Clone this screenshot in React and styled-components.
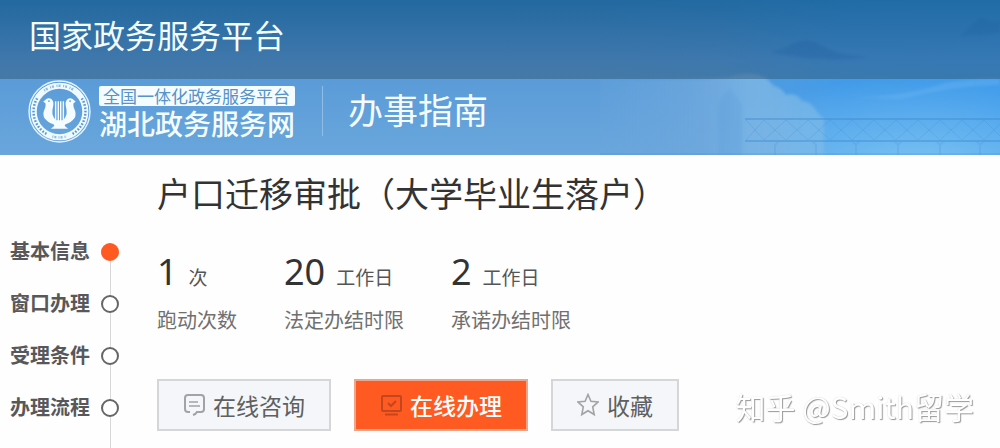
import React from "react";
import styled, { createGlobalStyle } from "styled-components";

const GlobalStyle = createGlobalStyle`
  * {
    box-sizing: border-box;
  }

  body {
    margin: 0;
    background: #fefefe;
    color: #333;
    font-family: "Noto Sans CJK SC", sans-serif;
  }

  h1,
  h2,
  p,
  ul,
  dl,
  dd {
    margin: 0;
    padding: 0;
  }
`;

const Page = styled.div`
  display: flex;
  flex-direction: column;
  min-height: 100vh;
`;

const StyledHeader = styled.header`
  position: relative;
  overflow: hidden;
  background: linear-gradient(#4592d4 0%, #5a9bd8 50%, #69a6dc 100%);
  color: #f4fcff;
`;

const Backdrop = styled.svg`
  position: absolute;
  top: 0;
  right: 0;
  width: 400px;
  height: 100%;
`;

const TopBar = styled.div`
  position: relative;
  padding: 10px 29px 21px;
  background: linear-gradient(
    rgba(20, 88, 138, 0.7),
    rgba(46, 92, 136, 0.55) 75%,
    rgba(50, 94, 126, 0.55)
  );
  font-size: 32px;
  line-height: 48px;
`;

const BrandBar = styled.div`
  position: relative;
  display: flex;
  align-items: center;
  height: 76px;
  padding: 0 28px 12px;
`;

const Brand = styled.a`
  display: flex;
  align-items: center;
  gap: 8px;
  color: inherit;
  text-decoration: none;
`;

const Emblem = styled.svg`
  width: 63px;
  height: 63px;
`;

const BrandText = styled.span`
  display: flex;
  flex-direction: column;
  padding-top: 4px;
`;

const BrandTag = styled.span`
  padding: 0 4px;
  border-radius: 2px;
  background: #f4fcff;
  color: #5593c8;
  font-size: 17px;
  line-height: 20px;
`;

const BrandName = styled.span`
  font-size: 28px;
  font-weight: 500;
  line-height: 34px;
`;

const Channel = styled.h2`
  margin-left: 27px;
  padding: 0 0 4px 25px;
  border-left: 1px solid #8fbde6;
  font-size: 35px;
  font-weight: 400;
  line-height: 46px;
`;

const Content = styled.div`
  display: flex;
  flex: 1;
`;

const StepList = styled.ul`
  display: flex;
  flex-direction: column;
  width: 157px;
  padding-top: 71px;
  list-style: none;
  flex-shrink: 0;
`;

const Step = styled.li`
  display: flex;
  height: 52px;

  &:last-child {
    flex: 1;
  }
`;

const StepLink = styled.a`
  width: 101px;
  padding-left: 10px;
  color: #58585a;
  font-size: 20px;
  font-weight: 700;
  line-height: 50px;
  text-decoration: none;
`;

// the dot sits on top of the line that runs on to the next step
const Track = styled.span`
  display: flex;
  flex-direction: column;
  align-items: center;
  width: 18px;

  &::before {
    content: "";
    width: 1px;
    height: 17px;
    background: ${(props) => (props.$first ? "transparent" : "#d8d8d8")};
  }

  &::after {
    content: "";
    flex: 1;
    width: 1px;
    background: #d8d8d8;
  }
`;

const Dot = styled.span`
  width: 18px;
  height: 18px;
  border: 2px solid ${(props) => (props.$active ? "#ff5a22" : "#666")};
  border-radius: 50%;
  background: ${(props) => (props.$active ? "#ff5a22" : "#fff")};
`;

const Main = styled.main`
  flex: 1;
  padding: 13px 24px 17px 0;
`;

const Title = styled.h1`
  font-size: 34px;
  font-weight: 400;
  line-height: 50px;
`;

const Stats = styled.dl`
  display: flex;
  gap: 47px;
  margin-top: 31px;
`;

const Stat = styled.div`
  display: flex;
  flex-direction: column-reverse;
`;

const StatValue = styled.dd`
  display: flex;
  align-items: baseline;
  gap: 11px;
  font-family: "Noto Sans", "Noto Sans CJK SC", sans-serif;
  font-size: 36px;
  line-height: 46px;
`;

const Unit = styled.span`
  color: #555;
  font-family: "Noto Sans CJK SC", sans-serif;
  font-size: 19px;
`;

const StatLabel = styled.dt`
  color: #707070;
  font-size: 20px;
  line-height: 40px;
`;

const Actions = styled.div`
  display: flex;
  flex-wrap: wrap;
  gap: 23px;
  margin-top: 39px;
`;

const Button = styled.button`
  display: flex;
  align-items: center;
  gap: 8px;
  height: 52px;
  padding: 0 24px;
  border: 2px solid ${(props) => (props.$primary ? "#eda58c" : "#d5d6d7")};
  background: ${(props) => (props.$primary ? "#ff5a22" : "#f4f6f9")};
  color: ${(props) => (props.$primary ? "#fff" : "#606060")};
  font-family: inherit;
  font-size: 23px;
  font-weight: ${(props) => (props.$primary ? 500 : 400)};
  cursor: pointer;

  svg {
    width: 22px;
    height: 24px;
    fill: none;
    stroke: ${(props) => (props.$primary ? "#c4461d" : "#a2a3a5")};
    stroke-width: 2;
  }
`;

const Watermark = styled.div`
  position: fixed;
  right: 26px;
  bottom: 22px;
  color: #fff;
  font-size: 30px;
  line-height: 40px;
  text-shadow: 1px 1px 1px #999, 0 0 1px #ccc;
`;

const steps = ["基本信息", "窗口办理", "受理条件", "办理流程"];

const stats = [
  { value: "1", unit: "次", label: "跑动次数" },
  { value: "20", unit: "工作日", label: "法定办结时限" },
  { value: "2", unit: "工作日", label: "承诺办结时限" },
];

function Scenery() {
  return (
    <Backdrop viewBox="0 0 400 155" preserveAspectRatio="none" aria-hidden="true">
      <defs>
        <linearGradient id="sky" x1="0" x2="1" y1="0" y2="0">
          <stop offset="0" stopColor="#3c9bec" stopOpacity="0" />
          <stop offset="0.3" stopColor="#3c9bec" stopOpacity="0.2" />
          <stop offset="0.6" stopColor="#3c9bec" stopOpacity="0.8" />
          <stop offset="1" stopColor="#3c9bec" stopOpacity="0.9" />
        </linearGradient>
        <radialGradient id="haze" cx="0.8" cy="1.1" r="0.6">
          <stop offset="0" stopColor="#84c8f4" stopOpacity="0.9" />
          <stop offset="1" stopColor="#84c8f4" stopOpacity="0" />
        </radialGradient>
        <linearGradient id="cloud" x1="0" x2="1" y1="0" y2="0">
          <stop offset="0" stopColor="#70a8dc" stopOpacity="0" />
          <stop offset="0.5" stopColor="#70a8dc" stopOpacity="0.8" />
          <stop offset="0.7" stopColor="#7ab4e4" stopOpacity="0.9" />
          <stop offset="1" stopColor="#80bce8" stopOpacity="0.6" />
        </linearGradient>
        <filter id="soft" x="-20%" y="-50%" width="140%" height="200%">
          <feGaussianBlur stdDeviation="1.5" />
        </filter>
      </defs>
      <rect width="400" height="155" fill="url(#sky)" />
      <rect width="400" height="155" fill="url(#haze)" />
      <path
        d="M170 52Q185 49 194 43Q204 38 216 42Q224 47 236 52Q248 56 270 57Q220 64 170 52Z"
        fill="#1f6fc8"
        opacity="0.4"
        filter="url(#soft)"
      />
      <path
        d="M360 36Q372 24 382 17Q390 23 400 21V33Q380 36 360 36Z"
        fill="#1f6fc8"
        opacity="0.3"
        filter="url(#soft)"
      />
      <path
        d="M-20 160V78Q60 82 128 77Q150 70 166 78L174 86Q182 88 186 95Q196 92 202 101Q212 102 217 112L224 119V160Z"
        fill="url(#cloud)"
        filter="url(#soft)"
      />
      <path
        d="M240 97Q300 99 345 83Q375 78 400 79V85Q350 86 300 99Z"
        fill="#79bdf4"
        opacity="0.3"
        filter="url(#soft)"
      />
      <path
        d="M118 160V104L122 96L129 88L136 96L142 104V160Z"
        fill="#559bdb"
        opacity="0.25"
        filter="url(#soft)"
      />
      <g fill="none" stroke="#3c88ce" opacity="0.4">
        <path d="M145 119H400" strokeWidth="2" />
        <path d="M145 141H400" strokeWidth="2" />
        <path
          d="M146 120l18 20 22-20 22 20 22-20 22 20 22-20 22 20 22-20 22 20 22-20 22 20 16-16M146 140l18-20 22 20 22-20 22 20 22-20 22 20 22-20 22 20 22-20 22 20 22-20 16 16"
          opacity="0.6"
        />
        <path
          d="M175 155V145l4-4M216 155V145l-4-4M256 155V145l-4-4M256 145l4-4M298 155V145l-4-4M298 145l4-4M340 155V145l-4-4M340 145l4-4M380 155V145l-4-4M380 145l4-4"
          strokeWidth="2"
          opacity="0.4"
        />
      </g>
      <path d="M0 154H400" stroke="#4f92d0" opacity="0.5" />
    </Backdrop>
  );
}

function LyreEmblem() {
  return (
    <Emblem viewBox="0 0 62 62" aria-hidden="true">
      <circle cx="31" cy="31" r="30" fill="none" stroke="#e4f4fd" strokeWidth="1.4" />
      <circle cx="31" cy="31" r="25.4" fill="none" stroke="#eefaff" strokeWidth="6" />
      {/* laurel branches on both sides */}
      <g fill="none" stroke="#5796cf" strokeWidth="2.4" strokeDasharray="1.6 1.6">
        <path d="M9 18A25.5 25.5 0 0 0 19 53.5" />
        <path d="M53 18A25.5 25.5 0 0 1 43 53.5" />
      </g>
      {/* lettering bands, top and bottom */}
      <g fill="none" stroke="#8fbce0" strokeWidth="2.4">
        <path d="M16 10.5A25.5 25.5 0 0 1 46 10.5" strokeDasharray="1 1 2 2.5" />
        <path d="M24 55.5A25.5 25.5 0 0 0 38 55.5" strokeDasharray="1 1 2 2" />
      </g>
      <path
        d="M15 21Q16.5 20.5 18 18.8Q20.5 17 23 18.8Q25.8 21.5 24.8 25.5Q23.6 30 24 33.5Q24.8 37.5 28 39.5H34Q37.2 37.5 38 33.5Q38.4 30 37.2 25.5Q36.2 21.5 39 18.8Q41.5 17 44 18.8Q45.5 20.5 47 21L44.6 23.4Q44.4 26.4 46 29.5Q48 34 45.5 38Q42.5 42 37 43.5Q35.5 44.5 36.5 45.5L39.5 48H22.5L25.5 45.5Q26.5 44.5 25 43.5Q19.5 42 16.5 38Q14 34 16 29.5Q17.6 26.4 17.4 23.4Z"
        fill="#f4fcff"
      />
      <path
        d="M27.2 21V40M29.8 21V41M32.2 21V41M34.8 21V40"
        stroke="#f4fcff"
        strokeWidth="1.4"
      />
      <circle cx="20.6" cy="20.8" r="0.8" fill="#5796cf" />
      <circle cx="41.4" cy="20.8" r="0.8" fill="#5796cf" />
    </Emblem>
  );
}

function ChatIcon() {
  return (
    <svg viewBox="0 0 22 24" aria-hidden="true">
      <path d="M7 19H5Q2 19 2 16V5Q2 2 5 2H18Q21 2 21 5V16Q21 19 18 19H14Q13 21 10 22" />
      <path d="M6 9H15M6 13H17" strokeWidth="1.5" />
    </svg>
  );
}

function ScreenCheckIcon() {
  return (
    <svg viewBox="0 0 22 24" aria-hidden="true">
      <rect x="2" y="3" width="19" height="15" rx="1" />
      <path d="M8 10l3 3 5-5" />
      <path d="M5 21.5H18" />
    </svg>
  );
}

function StarIcon() {
  return (
    <svg viewBox="0 0 22 24" aria-hidden="true">
      <path
        d="M11 1.5L13.9 8.2L21 9L15.7 13.8L17.2 21.5L11 17.7L4.8 21.5L6.3 13.8L1 9L8.1 8.2Z"
        strokeWidth="1.6"
      />
    </svg>
  );
}

function Header() {
  return (
    <StyledHeader>
      <Scenery />
      <TopBar>国家政务服务平台</TopBar>
      <BrandBar>
        <Brand href="#home">
          <LyreEmblem />
          <BrandText>
            <BrandTag>全国一体化政务服务平台</BrandTag>
            <BrandName>湖北政务服务网</BrandName>
          </BrandText>
        </Brand>
        <Channel>办事指南</Channel>
      </BrandBar>
    </StyledHeader>
  );
}

function App() {
  return (
    <Page>
      <GlobalStyle />
      <Header />
      <Content>
        <StepList>
          {steps.map((step, index) => (
            <Step key={step}>
              <StepLink href={`#step-${index + 1}`}>{step}</StepLink>
              <Track $first={index === 0}>
                <Dot $active={index === 0} />
              </Track>
            </Step>
          ))}
        </StepList>
        <Main>
          <Title>户口迁移审批（大学毕业生落户）</Title>
          <Stats>
            {stats.map(({ value, unit, label }) => (
              <Stat key={label}>
                <StatLabel>{label}</StatLabel>
                <StatValue>
                  {value}
                  <Unit>{unit}</Unit>
                </StatValue>
              </Stat>
            ))}
          </Stats>
          <Actions>
            <Button type="button">
              <ChatIcon />
              在线咨询
            </Button>
            <Button type="button" $primary>
              <ScreenCheckIcon />
              在线办理
            </Button>
            <Button type="button">
              <StarIcon />
              收藏
            </Button>
          </Actions>
        </Main>
      </Content>
      <Watermark>知乎 @Smith留学</Watermark>
    </Page>
  );
}

export default App;
